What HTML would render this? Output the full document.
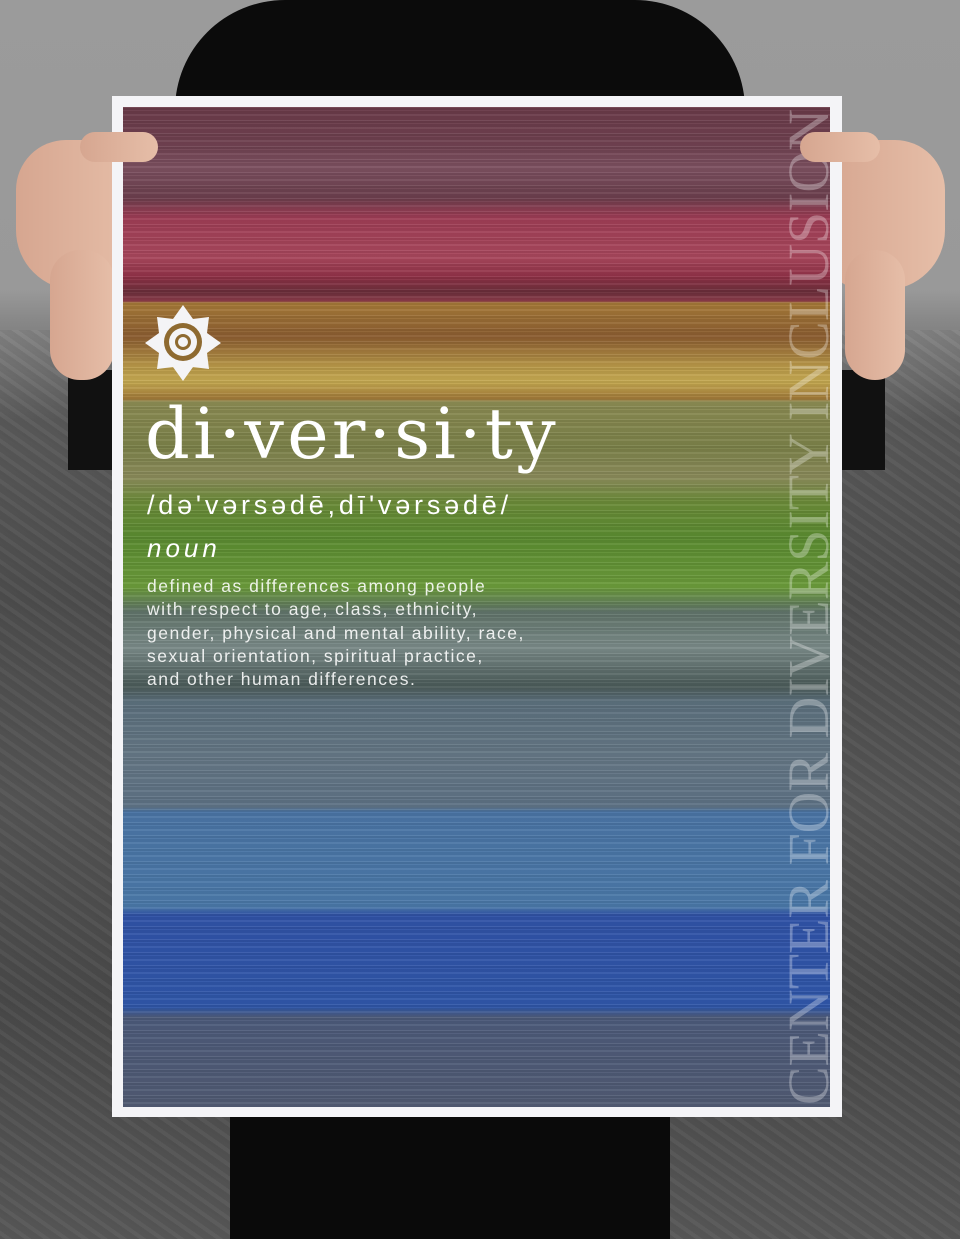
<!DOCTYPE html>
<html><head><style>
body{margin:0;width:960px;height:1239px;overflow:hidden;position:relative;background:#8a8a8a;font-family:"Liberation Sans",sans-serif}
.bg{position:absolute;inset:0;background:linear-gradient(180deg,#9b9b9b 0,#999 290px,#888 320px,#5a5a5a 420px,#4e4e4e 600px,#555 800px,#4a4a4a 1000px,#585858 1239px)}
.tex{position:absolute;left:0;right:0;top:330px;bottom:0;background:repeating-linear-gradient(35deg,rgba(0,0,0,.05) 0 3px,rgba(255,255,255,.03) 3px 7px,rgba(0,0,0,.04) 7px 11px)}
.shirt{position:absolute;left:175px;top:0;width:570px;height:110px;background:#0b0b0b;border-radius:110px 110px 0 0}
.pants{position:absolute;left:230px;top:1110px;width:440px;height:129px;background:#0a0a0a}
.slL{position:absolute;left:68px;top:370px;width:50px;height:100px;background:#111}
.slR{position:absolute;left:840px;top:370px;width:45px;height:100px;background:#111}
.hand{position:absolute;background:linear-gradient(90deg,#d6a690,#e6bea8);border-radius:40px}
.poster{position:absolute;left:112px;top:96px;width:730px;height:1021px;background:#f4f4f7}
.art{position:absolute;left:123px;top:107px;width:707px;height:1000px;overflow:hidden;
background:linear-gradient(180deg,#693a48 0,#6f4150 40px,#7c5060 60px,#6a3e4c 90px,#9c3c54 110px,#a8475c 150px,#8e3046 170px,#6a2e3a 185px,#8a3a48 194px,#a67a38 196px,#8a5c30 230px,#b89848 260px,#c4a850 275px,#a07838 292px,#8a8a52 295px,#7a8048 340px,#8a8a5a 370px,#6a8a38 395px,#5a8a30 430px,#6a9a3a 480px,#5f7268 505px,#7a8a88 540px,#4a5a58 580px,#5b6f7c 595px,#647684 650px,#5d7184 700px,#4a74a4 705px,#4a78a8 800px,#3052a6 808px,#2f56a8 900px,#4c5a7a 910px,#505a72 1000px)}
.lines{position:absolute;inset:0;background:repeating-linear-gradient(180deg,rgba(255,255,255,.08) 0 1px,rgba(0,0,0,.07) 1px 3px,rgba(255,255,255,.04) 3px 4px,rgba(0,0,0,.05) 4px 7px,rgba(255,255,255,.06) 7px 9px,rgba(0,0,0,.03) 9px 13px)}
.t{position:absolute;color:#fff;white-space:nowrap}
</style></head><body>
<div class="bg"></div><div class="tex"></div>
<div class="shirt"></div><div class="pants"></div>
<div class="slL"></div><div class="slR"></div>
<div class="hand" style="left:16px;top:140px;width:120px;height:150px;border-radius:50px 30px 40px 60px"></div>
<div class="hand" style="left:50px;top:250px;width:64px;height:130px;border-radius:30px"></div>
<div class="hand" style="left:825px;top:140px;width:120px;height:150px;border-radius:30px 50px 60px 40px"></div>
<div class="hand" style="left:845px;top:250px;width:60px;height:130px;border-radius:30px"></div>
<div class="poster"></div>
<div class="art"><div class="lines"></div>
<svg style="position:absolute;left:22px;top:198px" width="76" height="76" viewBox="0 0 76 76">
<polygon fill="#f4f4f6" points="38,0 48,14 64,12 62,28 76,38 62,48 64,64 48,62 38,76 28,62 12,64 14,48 0,38 14,28 12,12 28,14"/>
<circle cx="38" cy="37" r="19" fill="#8e6a30"/><circle cx="38" cy="37" r="14" fill="#f4f4f6"/><circle cx="38" cy="37" r="8" fill="#8e6a30"/><circle cx="38" cy="37" r="5" fill="#f4f4f6"/>
</svg>
<svg style="position:absolute;left:660px;top:0" width="47" height="1000"><text transform="translate(45,998) rotate(-90)" font-family="Liberation Serif,serif" font-size="58" fill="rgba(255,255,255,.3)" textLength="996" lengthAdjust="spacingAndGlyphs">CENTER FOR DIVERSITY INCLUSION</text></svg>
</div>
<div class="hand" style="left:80px;top:132px;width:78px;height:30px;border-radius:15px"></div>
<div class="hand" style="left:800px;top:132px;width:80px;height:30px;border-radius:15px"></div>
<div class="t" style="left:145px;top:393px;font-family:'DejaVu Serif',serif;font-size:70px;font-weight:300;letter-spacing:3.3px">di·ver·si·ty</div>
<div class="t" style="left:147px;top:490px;font-size:27px;letter-spacing:3.8px">/də'vərsədē,dī'vərsədē/</div>
<div class="t" style="left:147px;top:533px;font-size:26px;font-style:italic;letter-spacing:4px">noun</div>
<div class="t" style="left:147px;top:575px;font-size:17.5px;line-height:23.3px;letter-spacing:1.5px;color:rgba(255,255,255,.88)">defined as differences among people<br>with respect to age, class, ethnicity,<br>gender, physical and mental ability, race,<br>sexual orientation, spiritual practice,<br>and other human differences.</div>
</body></html>
